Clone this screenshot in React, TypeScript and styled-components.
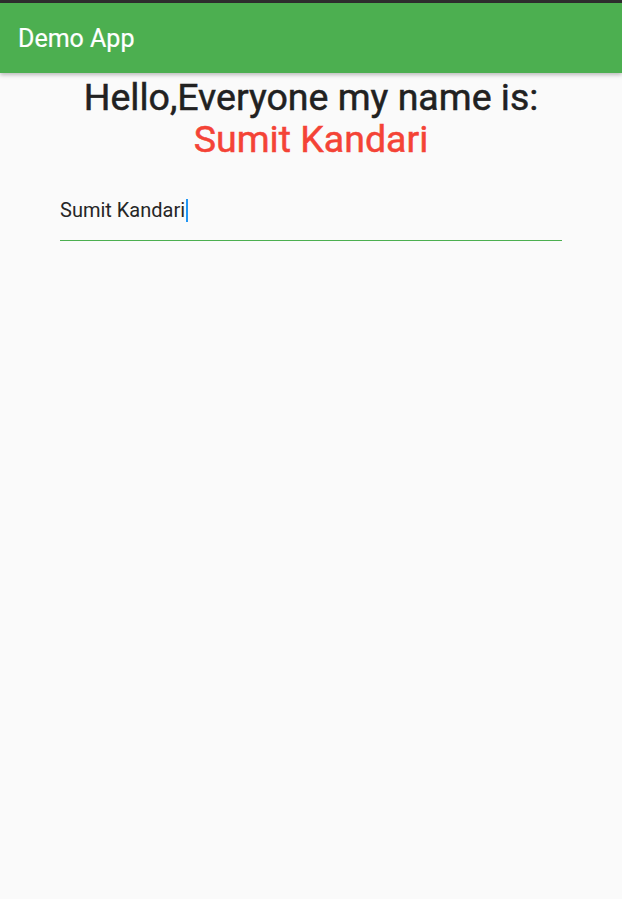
import React from "react";
import styled, { createGlobalStyle } from "styled-components";

const Global = createGlobalStyle`
  html, body { margin: 0; padding: 0; background: #fafafa; }
  body { font-family: Roboto, "Noto Sans", sans-serif; }
`;

const Screen = styled.div`
  width: 622px;
  height: 899px;
  background: #fafafa;
  display: flex;
  flex-direction: column;
  overflow: hidden;
`;

const StatusStrip = styled.div`
  height: 3px;
  background: #2e2e2e;
`;

const AppBar = styled.header`
  height: 70px;
  background: #4caf50;
  display: flex;
  align-items: center;
  padding-left: 18px;
  box-shadow: 0 2px 4px rgba(0, 0, 0, 0.25);
  position: relative;
  z-index: 1;
`;

const Title = styled.h1`
  margin: 0;
  font-family: Roboto, sans-serif;
  font-weight: 400;
  font-size: 25px;
  color: #ffffff;
  -webkit-text-stroke: 0.2px #ffffff;
`;

const Body = styled.main`
  display: flex;
  flex-direction: column;
  align-items: center;
  padding-top: 3px;
`;

const Heading = styled.div<{ $accent?: boolean }>`
  font-family: Roboto, sans-serif;
  font-weight: 400;
  font-size: 37.5px;
  line-height: 42px;
  color: ${(p) => (p.$accent ? "#f44336" : "#212121")};
  -webkit-text-stroke: 0.5px ${(p) => (p.$accent ? "#f44336" : "#212121")};
  text-align: center;
`;

const Field = styled.div`
  align-self: stretch;
  margin: 38px 60px 0 60px;
  border-bottom: 1px solid #4caf50;
  padding: 0 0 18px 0;
  display: flex;
  align-items: center;
`;

const FieldText = styled.span`
  font-family: Roboto, sans-serif;
  font-size: 20px;
  line-height: 24px;
  color: #262626;
`;

const Caret = styled.span`
  display: inline-block;
  width: 2px;
  height: 23px;
  background: #2196f3;
  margin-left: 1px;
`;

export default function App() {
  return (
    <Screen>
      <Global />
      <StatusStrip />
      <AppBar>
        <Title>Demo App</Title>
      </AppBar>
      <Body>
        <Heading>Hello,Everyone my name is:</Heading>
        <Heading $accent>Sumit Kandari</Heading>
        <Field>
          <FieldText>Sumit Kandari</FieldText>
          <Caret />
        </Field>
      </Body>
    </Screen>
  );
}
